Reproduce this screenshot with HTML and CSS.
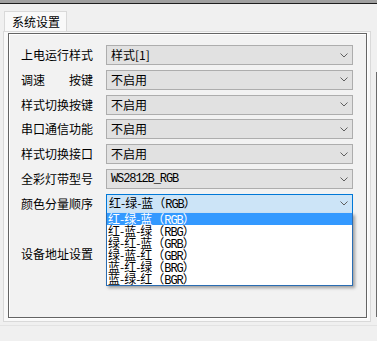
FILE: index.html
```html
<!DOCTYPE html>
<html lang="zh-CN">
<head>
    <meta charset="UTF-8">
    <meta name="viewport" content="width=device-width, initial-scale=1.0">
    <title>系统设置</title>
    <link rel="stylesheet" href="styles.css">
</head>
<body>
    <div class="window">
        <div class="topbar"></div>

        <div class="tabs">
            <div class="tab">系统设置</div>
        </div>

        <div class="body">
            <div class="page">
                <div class="group">
                    <div class="row">
                        <div class="label">上电运行样式</div>
                        <div class="combo"><span>样式[1]</span><svg class="chev" width="8" height="5" viewBox="0 0 8 5"><polyline points="0.5,0.5 4,4 7.5,0.5"/></svg></div>
                    </div>
                    <div class="row">
                        <div class="label split"><span>调速</span><span>按键</span></div>
                        <div class="combo"><span>不启用</span><svg class="chev" width="8" height="5" viewBox="0 0 8 5"><polyline points="0.5,0.5 4,4 7.5,0.5"/></svg></div>
                    </div>
                    <div class="row">
                        <div class="label">样式切换按键</div>
                        <div class="combo"><span>不启用</span><svg class="chev" width="8" height="5" viewBox="0 0 8 5"><polyline points="0.5,0.5 4,4 7.5,0.5"/></svg></div>
                    </div>
                    <div class="row">
                        <div class="label">串口通信功能</div>
                        <div class="combo"><span>不启用</span><svg class="chev" width="8" height="5" viewBox="0 0 8 5"><polyline points="0.5,0.5 4,4 7.5,0.5"/></svg></div>
                    </div>
                    <div class="row">
                        <div class="label">样式切换接口</div>
                        <div class="combo"><span>不启用</span><svg class="chev" width="8" height="5" viewBox="0 0 8 5"><polyline points="0.5,0.5 4,4 7.5,0.5"/></svg></div>
                    </div>
                    <div class="row">
                        <div class="label">全彩灯带型号</div>
                        <div class="combo mono"><span class="latin">WS2812B_RGB</span><svg class="chev" width="8" height="5" viewBox="0 0 8 5"><polyline points="0.5,0.5 4,4 7.5,0.5"/></svg></div>
                    </div>
                    <div class="row">
                        <div class="label">颜色分量顺序</div>
                        <div class="combo mono open">
                            <span>红-绿-蓝（<span class="latin">RGB</span>）</span>
                            <svg class="chev" width="8" height="5" viewBox="0 0 8 5"><polyline points="0.5,0.5 4,4 7.5,0.5"/></svg>
                            <ul class="dropdown">
                                <li class="selected">红-绿-蓝（<span class="latin">RGB</span>）</li>
                                <li>红-蓝-绿（<span class="latin">RBG</span>）</li>
                                <li>绿-红-蓝（<span class="latin">GRB</span>）</li>
                                <li>绿-蓝-红（<span class="latin">GBR</span>）</li>
                                <li>蓝-红-绿（<span class="latin">BRG</span>）</li>
                                <li>蓝-绿-红（<span class="latin">BGR</span>）</li>
                            </ul>
                        </div>
                    </div>
                    <div class="row last">
                        <div class="label">设备地址设置</div>
                    </div>
                </div>
            </div>
            <div class="edge"></div>
        </div>

        <div class="footer"></div>
    </div>
</body>
</html>
```

FILE: styles.css
```css
body {
    margin: 0;
    background-color: #f0f0f0;
    font-family: "Noto Sans CJK SC", sans-serif;
    font-size: 12px;
    color: #000;
}

.window {
    width: 377px;
    height: 341px;
    overflow: hidden;
}

.topbar {
    height: 3px;
    background-color: #a0a0a0;
    border-bottom: 1px solid #1e1e1e;
}

.tabs {
    padding: 7px 0 0 4px;
    display: flex;
}

.tab {
    height: 19px;
    line-height: 19px;
    padding: 0 6px 0 7px;
    border: 1px solid #d9d9d9;
    border-bottom: none;
    background-color: #f9f9f9;
}

.body {
    display: flex;
    margin-left: 3px;
}

.page {
    width: 368px;
    height: 291px;
    box-sizing: border-box;
    padding: 1px 3px 3px 4px;
    border: 1px solid #d9d9d9;
    background-color: #f9f9f9;
}

.edge {
    width: 1px;
    height: 245px;
    margin: 41px 0 0 5px;
    background-color: #6b6b6b;
}

.group {
    height: 285px;
    box-sizing: border-box;
    padding: 11px 12px 0 12px;
    border: 1px solid #646464;
    background-color: #f2f2f2;
    box-shadow: 1px 1px 0 #fff, inset 1px 1px 0 #fff;
    display: flex;
    flex-direction: column;
    gap: 4.83px;
}

.row {
    display: flex;
    align-items: center;
    gap: 13px;
}

.row.last {
    margin-top: 25px;
}

.label {
    width: 72px;
    line-height: 20px;
    white-space: nowrap;
}

.split {
    display: flex;
    justify-content: space-between;
}

.combo {
    position: relative;
    width: 247px;
    height: 20px;
    box-sizing: border-box;
    padding-left: 4px;
    border: 1px solid #adadad;
    background-color: #e1e1e1;
    display: flex;
    align-items: center;
    line-height: 18px;
}

.combo.open {
    border-color: #0078d7;
    background-color: #cce4f7;
    padding-left: 2px;
}

.mono .latin,
.dropdown .latin {
    font-family: "Liberation Mono", monospace;
    font-size: 12px;
    letter-spacing: -1.1px;
}

.chev {
    margin-left: auto;
    margin-right: 4px;
    fill: none;
    stroke: #5f5f5f;
    stroke-width: 1;
}

.dropdown {
    position: absolute;
    top: 18px;
    left: -1px;
    width: 247px;
    box-sizing: border-box;
    margin: 0;
    padding: 0;
    list-style: none;
    border: 1px solid #2a6db3;
    border-top: none;
    background-color: #fff;
    box-shadow: 2px 2px 3px rgba(0,0,0,0.35);
    z-index: 2;
}

.dropdown li {
    height: 12px;
    line-height: 12px;
    padding-left: 1px;
    white-space: nowrap;
}

.dropdown li.selected {
    background-color: #3399ff;
    color: #fff;
}

.footer {
    margin-top: 3px;
    border-top: 1px solid #e3e3e3;
}
```
